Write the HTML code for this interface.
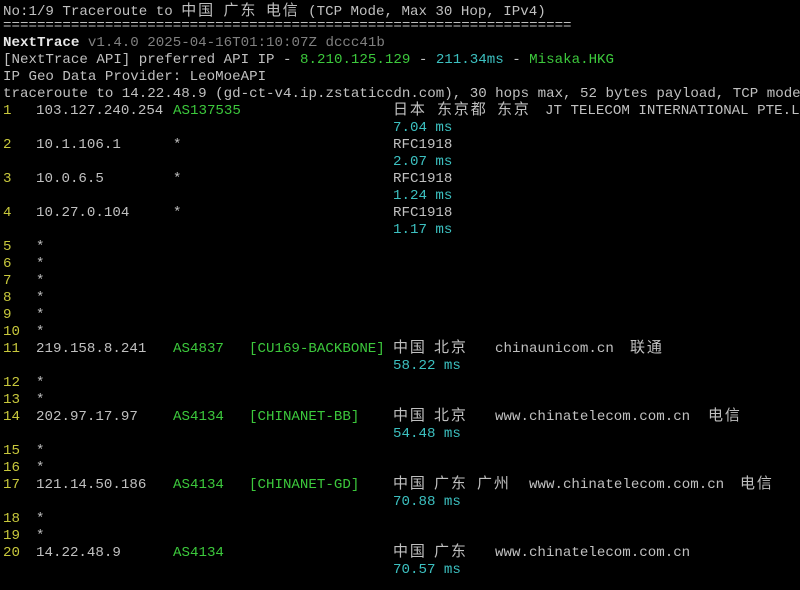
<!DOCTYPE html>
<html><head><meta charset="utf-8"><style>
html,body{margin:0;padding:0;background:#000;width:800px;height:590px;overflow:hidden}
body{position:relative;font-family:"Liberation Mono",monospace;font-size:14.15px;color:#c0c0c0}
.l{position:absolute;white-space:pre;line-height:17px;height:17px}
.c{font-family:"Noto Sans CJK SC","WenQuanYi Zen Hei",sans-serif;font-size:15px;letter-spacing:1.9px;line-height:17px}
.l.c{margin-top:-3px}
.y{color:#c8c83c}.g{color:#3cc83c}.b{color:#3cc0c0}.d{color:#808080}.w{color:#e8e8e8;font-weight:bold}
</style></head><body>
<div class="l" style="top:1px;left:3px">No:1/9 Traceroute to <span class="c">中国</span> <span class="c">广东</span> <span class="c">电信</span> (TCP Mode, Max 30 Hop, IPv4)</div>
<div class="l" style="top:18px;left:3px">===================================================================</div>
<div class="l" style="top:35px;left:3px"><span class="w">NextTrace</span><span class="d"> v1.4.0 2025-04-16T01:10:07Z dccc41b</span></div>
<div class="l" style="top:52px;left:3px">[NextTrace API] preferred API IP - <span class="g">8.210.125.129</span> - <span class="b">211.34ms</span> - <span class="g">Misaka.HKG</span></div>
<div class="l" style="top:69px;left:3px">IP Geo Data Provider: LeoMoeAPI</div>
<div class="l" style="top:86px;left:3px">traceroute to 14.22.48.9 (gd-ct-v4.ip.zstaticcdn.com), 30 hops max, 52 bytes payload, TCP mode</div>

<div class="l y" style="top:103px;left:3px">1</div><div class="l" style="top:103px;left:36px">103.127.240.254</div><div class="l g" style="top:103px;left:173px">AS137535</div>
<div class="l c" style="top:103px;left:393px">日本</div><div class="l c" style="top:103px;left:437px">东京都</div><div class="l c" style="top:103px;left:497px">东京</div><div class="l" style="top:103px;left:545px">JT TELECOM INTERNATIONAL PTE.L</div>
<div class="l b" style="top:120px;left:393px">7.04 ms</div>

<div class="l y" style="top:137px;left:3px">2</div><div class="l" style="top:137px;left:36px">10.1.106.1</div><div class="l" style="top:137px;left:173px">*</div><div class="l" style="top:137px;left:393px">RFC1918</div>
<div class="l b" style="top:154px;left:393px">2.07 ms</div>
<div class="l y" style="top:171px;left:3px">3</div><div class="l" style="top:171px;left:36px">10.0.6.5</div><div class="l" style="top:171px;left:173px">*</div><div class="l" style="top:171px;left:393px">RFC1918</div>
<div class="l b" style="top:188px;left:393px">1.24 ms</div>
<div class="l y" style="top:205px;left:3px">4</div><div class="l" style="top:205px;left:36px">10.27.0.104</div><div class="l" style="top:205px;left:173px">*</div><div class="l" style="top:205px;left:393px">RFC1918</div>
<div class="l b" style="top:222px;left:393px">1.17 ms</div>

<div class="l y" style="top:239px;left:3px">5</div><div class="l" style="top:239px;left:36px">*</div>
<div class="l y" style="top:256px;left:3px">6</div><div class="l" style="top:256px;left:36px">*</div>
<div class="l y" style="top:273px;left:3px">7</div><div class="l" style="top:273px;left:36px">*</div>
<div class="l y" style="top:290px;left:3px">8</div><div class="l" style="top:290px;left:36px">*</div>
<div class="l y" style="top:307px;left:3px">9</div><div class="l" style="top:307px;left:36px">*</div>
<div class="l y" style="top:324px;left:3px">10</div><div class="l" style="top:324px;left:36px">*</div>

<div class="l y" style="top:341px;left:3px">11</div><div class="l" style="top:341px;left:36px">219.158.8.241</div><div class="l g" style="top:341px;left:173px">AS4837</div><div class="l g" style="top:341px;left:249px">[CU169-BACKBONE]</div>
<div class="l c" style="top:341px;left:393px">中国</div><div class="l c" style="top:341px;left:434px">北京</div><div class="l" style="top:341px;left:495px">chinaunicom.cn</div><div class="l c" style="top:341px;left:630px">联通</div>
<div class="l b" style="top:358px;left:393px">58.22 ms</div>
<div class="l y" style="top:375px;left:3px">12</div><div class="l" style="top:375px;left:36px">*</div>
<div class="l y" style="top:392px;left:3px">13</div><div class="l" style="top:392px;left:36px">*</div>

<div class="l y" style="top:409px;left:3px">14</div><div class="l" style="top:409px;left:36px">202.97.17.97</div><div class="l g" style="top:409px;left:173px">AS4134</div><div class="l g" style="top:409px;left:249px">[CHINANET-BB]</div>
<div class="l c" style="top:409px;left:393px">中国</div><div class="l c" style="top:409px;left:434px">北京</div><div class="l" style="top:409px;left:495px">www.chinatelecom.com.cn</div><div class="l c" style="top:409px;left:708px">电信</div>
<div class="l b" style="top:426px;left:393px">54.48 ms</div>
<div class="l y" style="top:443px;left:3px">15</div><div class="l" style="top:443px;left:36px">*</div>
<div class="l y" style="top:460px;left:3px">16</div><div class="l" style="top:460px;left:36px">*</div>

<div class="l y" style="top:477px;left:3px">17</div><div class="l" style="top:477px;left:36px">121.14.50.186</div><div class="l g" style="top:477px;left:173px">AS4134</div><div class="l g" style="top:477px;left:249px">[CHINANET-GD]</div>
<div class="l c" style="top:477px;left:393px">中国</div><div class="l c" style="top:477px;left:434px">广东</div><div class="l c" style="top:477px;left:477px">广州</div><div class="l" style="top:477px;left:529px">www.chinatelecom.com.cn</div><div class="l c" style="top:477px;left:740px">电信</div>
<div class="l b" style="top:494px;left:393px">70.88 ms</div>
<div class="l y" style="top:511px;left:3px">18</div><div class="l" style="top:511px;left:36px">*</div>
<div class="l y" style="top:528px;left:3px">19</div><div class="l" style="top:528px;left:36px">*</div>

<div class="l y" style="top:545px;left:3px">20</div><div class="l" style="top:545px;left:36px">14.22.48.9</div><div class="l g" style="top:545px;left:173px">AS4134</div>
<div class="l c" style="top:545px;left:393px">中国</div><div class="l c" style="top:545px;left:434px">广东</div><div class="l" style="top:545px;left:495px">www.chinatelecom.com.cn</div>
<div class="l b" style="top:562px;left:393px">70.57 ms</div>
</body></html>
